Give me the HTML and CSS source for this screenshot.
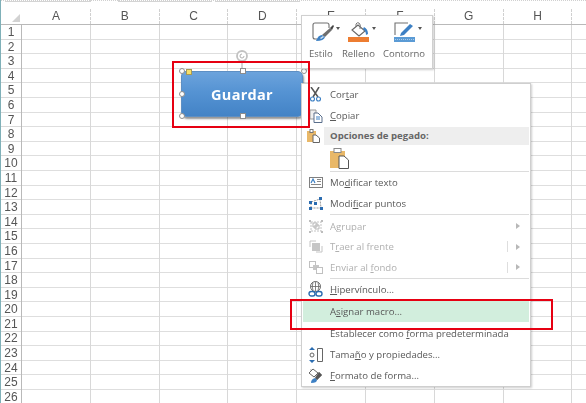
FILE: index.html
```html
<!DOCTYPE html>
<html lang="es">
<head>
    <meta charset="UTF-8">
    <meta name="viewport" content="width=device-width, initial-scale=1.0">
    <title>Asignar macro</title>
    <link rel="stylesheet" href="styles.css">
</head>
<body>
    <div class="app">
        <div class="ribbon-edge">
            <div class="ribbon-box box-a"></div>
            <div class="ribbon-box box-b"></div>
            <div class="ribbon-box box-c"></div>
        </div>

        <div class="col-headers">
            <div class="corner"><svg width="8" height="8" viewBox="0 0 8 8"><path d="M8 0V8H0Z" fill="#d2d2d2"/></svg></div>
            <div class="col">A</div>
            <div class="col">B</div>
            <div class="col">C</div>
            <div class="col">D</div>
            <div class="col">E</div>
            <div class="col">F</div>
            <div class="col">G</div>
            <div class="col">H</div>
            <div class="col"></div>
        </div>

        <div class="sheet">
            <div class="row-headers">
                <div>1</div><div>2</div><div>3</div><div>4</div><div>5</div><div>6</div><div>7</div>
                <div>8</div><div>9</div><div>10</div><div>11</div><div>12</div><div>13</div><div>14</div>
                <div>15</div><div>16</div><div>17</div><div>18</div><div>19</div><div>20</div><div>21</div>
                <div>22</div><div>23</div><div>24</div><div>25</div><div>26</div>
            </div>
            <div class="cells"></div>
        </div>

        <!-- forma seleccionada -->
        <div class="shape">Guardar</div>
        <svg class="rotate-handle" width="14" height="20" viewBox="0 0 14 20">
            <path d="M7 11V20" stroke="#a6a6a6" fill="none"/>
            <circle cx="7" cy="6" r="5" fill="#fff" stroke="#c2c2c2" stroke-width="1.8"/>
            <path d="M9 6A2 2 0 1 1 7 4" fill="none" stroke="#b0b0b0"/>
        </svg>
        <span class="handle round h-tl"></span>
        <span class="handle h-tc"></span>
        <span class="handle round h-tr"></span>
        <span class="handle round h-ml"></span>
        <span class="handle h-mr"></span>
        <span class="handle round h-bl"></span>
        <span class="handle h-bc"></span>
        <span class="handle round h-br"></span>
        <span class="handle yellow"></span>

        <!-- mini barra -->
        <div class="mini-bar">
            <div class="mini-btn btn-estilo">
                <div class="mini-icon">
                    <svg width="22" height="20" viewBox="0 0 22 20">
                        <path d="M5 17H3Q1 17 1 15V3Q1 1 3 1H15Q17 1 17 3V6" fill="#fff" stroke="#707070" stroke-width="1.1"/>
                        <path d="M10 13L18 6L20 8L13 15Z" fill="#6e6e6e"/>
                        <path d="M18 6L21 3L22 4L20 8Z" fill="#444"/>
                        <path d="M4 19Q6 13 10 13L13 15Q12 19 4 19Z" fill="#3d80c4"/>
                        <path d="M8 16L11 14L12 15L9 17Z" fill="#cfe0f0"/>
                    </svg>
                    <i class="caret"></i>
                </div>
                <span>Estilo</span>
            </div>
            <div class="mini-btn btn-relleno">
                <div class="mini-icon">
                    <svg width="22" height="20" viewBox="0 0 22 20">
                        <path d="M4 8L10 3L17 9L11 14Z" fill="#fff" stroke="#666" stroke-width="1.1"/>
                        <path d="M8 5V2Q9 0 11 1T12 7" fill="none" stroke="#777"/>
                        <path d="M16 5Q20 7 20 12L18 13Q18 9 15 7Z" fill="#3d80c4"/>
                        <rect x="0" y="15" width="21" height="5" fill="#ed7d31"/>
                    </svg>
                    <i class="caret"></i>
                </div>
                <span>Relleno</span>
            </div>
            <div class="mini-btn btn-contorno">
                <div class="mini-icon">
                    <svg width="22" height="20" viewBox="0 0 22 20">
                        <path d="M14 1H1V13" fill="none" stroke="#707070" stroke-width="1.1"/>
                        <path d="M7 11L16 2L19 4L10 13L6 14Z" fill="#3d80c4"/>
                        <rect x="0" y="15" width="21" height="5" fill="#5b9bd5"/>
                        <path d="M1 17.5H20" stroke="#a9cbe9" stroke-dasharray="1 1"/>
                    </svg>
                    <i class="caret"></i>
                </div>
                <span>Contorno</span>
            </div>
        </div>

        <!-- menu contextual -->
        <div class="menu">
            <div class="item">
                <span class="ico">
                    <svg width="11" height="15" viewBox="0 0 11 15"><path d="M1 0L8 10M9 0L3 10" stroke="#555" stroke-width="1.5"/><circle cx="2.5" cy="12" r="2" fill="none" stroke="#3d80c4" stroke-width="1.1"/><circle cx="8.5" cy="12" r="2" fill="none" stroke="#3d80c4" stroke-width="1.1"/></svg>
                </span>
                <span class="lbl">Cor<u>t</u>ar</span>
            </div>
            <div class="item">
                <span class="ico">
                    <svg width="14" height="14" viewBox="0 0 14 14"><path d="M1 1H7V10H1Z" fill="#efefef" stroke="#999"/><path d="M5 4H9L13 8V13.5H5Z" fill="#fff" stroke="#5a6f8c"/><path d="M7 8H11M7 10H11" stroke="#3d80c4"/></svg>
                </span>
                <span class="lbl"><u>C</u>opiar</span>
            </div>
            <div class="item-header">
                <span class="ico">
                    <svg width="13" height="14" viewBox="0 0 13 14"><rect x="0" y="2" width="9" height="11" fill="#e9b868"/><rect x="3" y="0.5" width="3" height="3" fill="#fff" stroke="#777"/><path d="M6 6H9L12.5 9V13.5H6Z" fill="#fff" stroke="#666"/></svg>
                </span>
                <span class="lbl">Opciones de pegado:</span>
            </div>
            <div class="paste-row">
                <svg width="19" height="21" viewBox="0 0 19 21"><rect x="0" y="3" width="15" height="17" fill="#e9b868"/><rect x="4" y="0.5" width="7" height="4" fill="#fff" stroke="#888"/><path d="M9 8H14L18.5 12V20.5H9Z" fill="#fff" stroke="#555"/></svg>
            </div>
            <div class="sep"></div>
            <div class="item">
                <span class="ico">
                    <svg width="14" height="11" viewBox="0 0 14 11"><rect x="0.5" y="0.5" width="13" height="10" fill="#fff" stroke="#808080"/><path d="M2 6L4 2L6 6" fill="none" stroke="#3d80c4" stroke-width="1.2"/><path d="M8 2.5H12M8 4.5H12M2 7.5H12" stroke="#888"/></svg>
                </span>
                <span class="lbl">Mo<u>d</u>ificar texto</span>
            </div>
            <div class="item">
                <span class="ico">
                    <svg width="14" height="13" viewBox="0 0 14 13"><path d="M2 11L2 5L11 2L12 11Z" fill="none" stroke="#999" stroke-dasharray="2 1"/><g fill="#2b6cb0"><rect x="0" y="10" width="3" height="3"/><rect x="0" y="4" width="3" height="3"/><rect x="5" y="5" width="3" height="3"/><rect x="10" y="0" width="3" height="3"/><rect x="11" y="10" width="3" height="3"/></g></svg>
                </span>
                <span class="lbl">Modi<u>f</u>icar puntos</span>
            </div>
            <div class="sep"></div>
            <div class="off-group">
                <div class="item off">
                    <span class="ico">
                        <svg width="14" height="13" viewBox="0 0 14 13"><path d="M2 2H12V11H2Z" fill="none" stroke="#c4c4c4" stroke-dasharray="2 1"/><path d="M4 3H8V7H4ZM6 5H10V9H6Z" fill="none" stroke="#b5b5b5"/><g fill="#bdbdbd"><rect x="0" y="0" width="2" height="2"/><rect x="12" y="0" width="2" height="2"/><rect x="0" y="11" width="2" height="2"/><rect x="12" y="11" width="2" height="2"/></g></svg>
                    </span>
                    <span class="lbl">A<u>g</u>rupar</span>
                    <i class="arrow"></i>
                </div>
                <div class="item off">
                    <span class="ico">
                        <svg width="14" height="13" viewBox="0 0 14 13"><path d="M1 7V1H7M7 12H13V6" fill="none" stroke="#c4c4c4"/><rect x="3" y="3" width="8" height="8" fill="#c6c6c6"/></svg>
                    </span>
                    <span class="lbl">T<u>r</u>aer al frente</span>
                    <i class="split"></i>
                    <i class="arrow"></i>
                </div>
                <div class="item off">
                    <span class="ico">
                        <svg width="14" height="13" viewBox="0 0 14 13"><rect x="0.5" y="0.5" width="6" height="6" fill="#fff" stroke="#c0c0c0"/><rect x="4" y="4" width="6" height="5" fill="#c6c6c6"/><rect x="7.5" y="6.5" width="6" height="6" fill="#fff" stroke="#c0c0c0"/></svg>
                    </span>
                    <span class="lbl">Enviar al <u>f</u>ondo</span>
                    <i class="split"></i>
                    <i class="arrow"></i>
                </div>
            </div>
            <div class="sep"></div>
            <div class="item">
                <span class="ico">
                    <svg width="15" height="16" viewBox="0 0 15 16"><circle cx="7.5" cy="5.5" r="5" fill="#fff" stroke="#666"/><path d="M2.5 5.5H12.5M7.5 .5V10.5M5 1.5Q3.5 5.5 5 9.5M10 1.5Q11.5 5.5 10 9.5" fill="none" stroke="#666" stroke-width=".8"/><rect x="1" y="10.5" width="6" height="4.5" rx="2.2" fill="#fff" stroke="#2b6cb0" stroke-width="1.4"/><rect x="8" y="10.5" width="6" height="4.5" rx="2.2" fill="#fff" stroke="#2b6cb0" stroke-width="1.4"/></svg>
                </span>
                <span class="lbl"><u>H</u>ipervínculo...</span>
            </div>
            <div class="item active">
                <span class="ico"></span>
                <span class="lbl">A<u>s</u>ignar macro...</span>
            </div>
            <div class="item">
                <span class="ico"></span>
                <span class="lbl">Establecer como <u>f</u>orma predeterminada</span>
            </div>
            <div class="item">
                <span class="ico">
                    <svg width="15" height="16" viewBox="0 0 15 16"><path d="M4 0L7 3H1ZM4 16L7 13H1Z" fill="#2b6cb0"/><circle cx="4" cy="8" r="2" fill="none" stroke="#666"/><path d="M9.5 1.5H14.5V14.5H9.5Z" fill="#fff" stroke="#666"/></svg>
                </span>
                <span class="lbl">Tama<u>ñ</u>o y propiedades...</span>
            </div>
            <div class="item">
                <span class="ico">
                    <svg width="15" height="16" viewBox="0 0 15 16"><path d="M1 5L5 1L10 5L6 9Z" fill="#fff" stroke="#666"/><path d="M3 3V1M11 4L14 7L9 12L7 10Z" fill="#555" stroke="#666" stroke-width=".5"/><path d="M3 15Q3 11 7 10L9 12Q9 15 3 15Z" fill="#3d80c4"/></svg>
                </span>
                <span class="lbl"><u>F</u>ormato de forma...</span>
            </div>
        </div>

        <!-- recuadros rojos -->
        <div class="red-box box-shape"></div>
        <div class="red-box box-macro"></div>
    </div>
</body>
</html>
```

FILE: styles.css
```css
* {
    box-sizing: border-box;
}

html, body {
    margin: 0;
    padding: 0;
    background-color: white;
}

.app {
    position: relative;
    width: 586px;
    height: 403px;
    overflow: hidden;
    font-family: 'Liberation Sans', Arial, sans-serif;
    border-left: 1px solid #7fb0b8;
    filter: blur(0.35px);
}

.ribbon-edge {
    display: flex;
    height: 9px;
    padding-left: 4px;
    border-top: 1px dotted #d0d0d0;
}

.ribbon-box {
    height: 2px;
    border: 1px solid #d4d4d4;
    border-top: none;
    margin-top: -1px;
}

.box-a { width: 86px; margin-right: 27px; }
.box-b { width: 94px; margin-right: 3px; }
.box-c { width: 85px; }

.col-headers {
    display: flex;
    height: 16px;
    border-bottom: 1px solid #b9b9b9;
}

.corner {
    width: 21px;
    flex: none;
    display: flex;
    justify-content: flex-end;
    align-items: flex-end;
    padding: 0 2px 2px 0;
}

.col {
    width: 68.8px;
    flex: none;
    text-align: center;
    font-size: 12px;
    line-height: 15px;
    color: #555;
    border-right: 1px dashed #d0d0d0;
}

.sheet {
    display: flex;
    height: 378px;
}

.row-headers {
    width: 21px;
    flex: none;
    border-right: 1px solid #b9b9b9;
    background-image: repeating-linear-gradient(to bottom, transparent 0, transparent 13.6px, #d9d9d9 13.6px, #d9d9d9 14.6px);
}

.row-headers div {
    height: 14.6px;
    line-height: 14px;
    font-size: 12px;
    color: #555;
    text-align: center;
}

.cells {
    flex: 1;
    background-image:
        repeating-linear-gradient(to right, transparent 0, transparent 67.8px, #d8d8d8 67.8px, #d8d8d8 68.8px),
        repeating-linear-gradient(to bottom, transparent 0, transparent 13.6px, #dedede 13.6px, #dedede 14.6px);
}

/* forma */
.shape {
    position: absolute;
    left: 180px;
    top: 71px;
    width: 122px;
    height: 46px;
    border-radius: 5px;
    border: 1px solid #5d8fc4;
    background: linear-gradient(to bottom, #6ca3dc 0%, #5593d3 45%, #4383c6 100%);
    box-shadow: 1px 2px 2px rgba(60, 60, 60, 0.55);
    color: white;
    font-family: 'Open Sans', sans-serif;
    font-weight: bold;
    font-size: 14.5px;
    letter-spacing: 0.3px;
    display: flex;
    align-items: center;
    justify-content: center;
}

.rotate-handle {
    position: absolute;
    left: 234px;
    top: 50px;
}

.handle {
    position: absolute;
    width: 6px;
    height: 6px;
    background-color: white;
    border: 1px solid #8d8d8d;
}

.handle.round {
    border-radius: 50%;
}

.handle.yellow {
    left: 185px;
    top: 69px;
    background-color: #f7e06a;
    border-color: #a89a55;
}

.h-tl { left: 178px; top: 68px; }
.h-tc { left: 239px; top: 68px; }
.h-tr { left: 300px; top: 68px; }
.h-ml { left: 178px; top: 91px; }
.h-mr { left: 300px; top: 91px; }
.h-bl { left: 178px; top: 113px; }
.h-bc { left: 239px; top: 113px; }
.h-br { left: 300px; top: 113px; }

/* mini barra */
.mini-bar {
    position: absolute;
    left: 300px;
    top: 15px;
    width: 132px;
    height: 54px;
    display: flex;
    padding: 6px 0 0 7px;
    background-color: white;
    border: 1px solid #d0d0d0;
    box-shadow: 1px 1px 2px rgba(0, 0, 0, 0.2);
}

.mini-btn {
    display: flex;
    flex-direction: column;
    align-items: flex-start;
    flex: none;
    font-family: 'Open Sans', sans-serif;
    font-size: 9.5px;
    line-height: 13px;
    color: #666;
    gap: 5px;
}

.btn-estilo { width: 33px; }
.btn-relleno { width: 41px; }
.btn-contorno { width: 44px; }

.mini-icon {
    display: flex;
    align-items: center;
    gap: 2px;
    height: 20px;
}

.btn-estilo .mini-icon { margin-left: 3px; }
.btn-relleno .mini-icon { margin-left: 6px; }
.btn-contorno .mini-icon { margin-left: 11px; }

.caret {
    width: 0;
    height: 0;
    border-left: 2.5px solid transparent;
    border-right: 2.5px solid transparent;
    border-top: 3px solid #555;
    margin-bottom: 8px;
}

/* menu */
.menu {
    position: absolute;
    left: 300px;
    top: 83px;
    width: 230px;
    height: 304px;
    padding: 0 1px;
    background-color: white;
    border: 1px solid #cfcfcf;
    box-shadow: 1px 1px 2px rgba(0, 0, 0, 0.2);
    font-family: 'Open Sans', sans-serif;
    font-size: 9.6px;
    color: #595959;
}

.item, .item-header {
    display: flex;
    align-items: center;
    height: 21px;
}

.ico {
    width: 25px;
    flex: none;
    display: flex;
    justify-content: center;
    align-items: center;
}

.item-header {
    height: 18px;
    margin-top: 1px;
    font-weight: bold;
    color: #666;
}

.item-header .ico {
    width: 21px;
    justify-content: flex-start;
    padding-left: 4px;
}

.item-header .lbl {
    background-color: #eeeeee;
    flex: 1;
    height: 18px;
    line-height: 18px;
    padding-left: 6px;
}

.paste-row {
    height: 26px;
    padding: 3px 0 0 27px;
}

.sep {
    height: 1px;
    margin-left: 27px;
    background-color: #dcdcdc;
}

.item .lbl {
    flex: 1;
    padding-left: 2px;
}

.off-group {
    padding-top: 1px;
}

.item.off {
    color: #b0b0b0;
    height: 20.5px;
}

.item.active {
    background-color: #d2eedd;
    margin-top: 1.5px;
    margin-bottom: 1px;
}

.arrow {
    width: 0;
    height: 0;
    margin-right: 9px;
    border-top: 3px solid transparent;
    border-bottom: 3px solid transparent;
    border-left: 4px solid #b8b8b8;
}

.split {
    width: 1px;
    height: 11px;
    margin-right: 8px;
    background-color: #dedede;
}

/* recuadros rojos */
.red-box {
    position: absolute;
    border: 2px solid #e60012;
}

.box-shape {
    left: 171px;
    top: 61px;
    width: 138px;
    height: 67px;
}

.box-macro {
    left: 289px;
    top: 299px;
    width: 263px;
    height: 31px;
}
```
